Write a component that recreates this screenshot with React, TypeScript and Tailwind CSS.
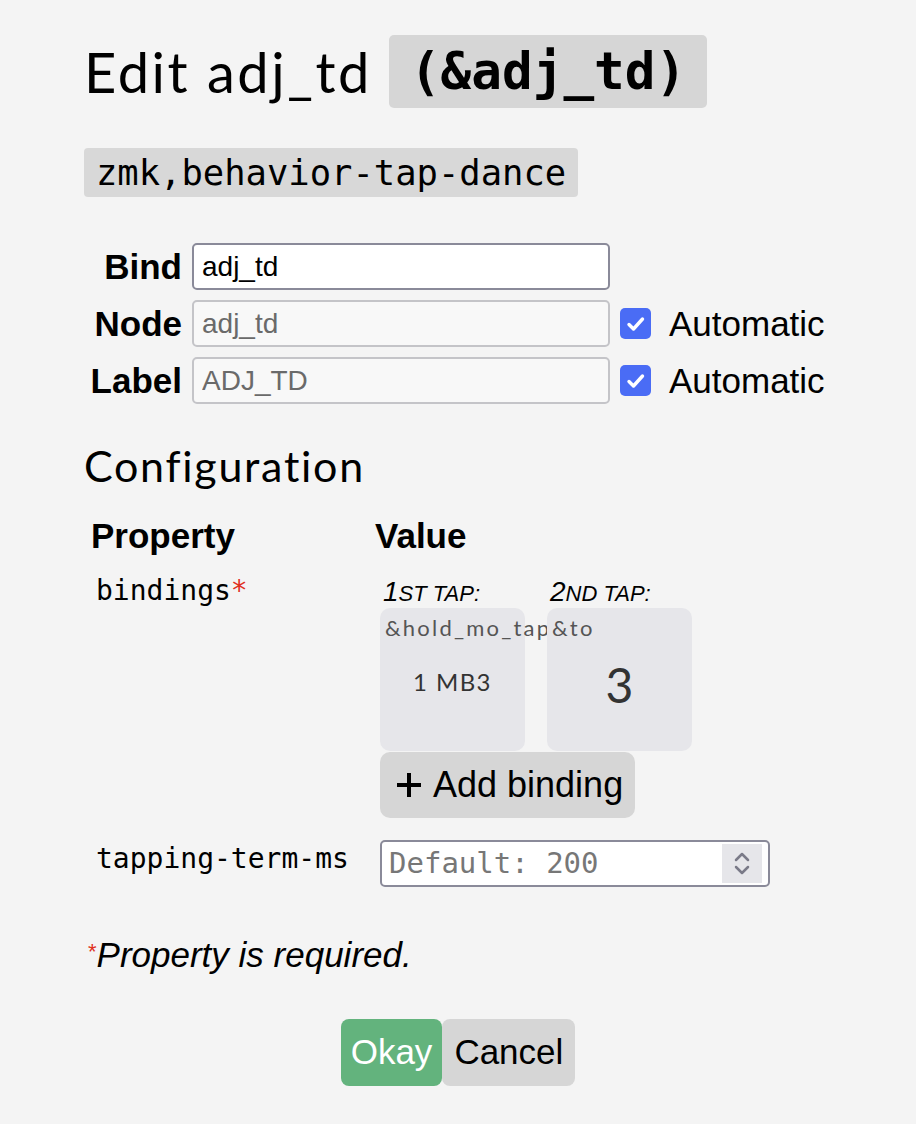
import { useState } from 'react';

const round = "font-['Lato','Noto_Sans',sans-serif]";
const mono = "font-['DejaVu_Sans_Mono','Liberation_Mono',monospace]";
const sans = "font-['Liberation_Sans','Arial',sans-serif]";

function Checkbox({ checked, onChange }: { checked: boolean; onChange: (v: boolean) => void }) {
  return (
    <button
      type="button"
      onClick={() => onChange(!checked)}
      className={`flex h-[31px] w-[31px] items-center justify-center rounded-[5px] ${
        checked ? 'bg-[#4a6cf5]' : 'border-2 border-[#8a8a99] bg-white'
      }`}
    >
      {checked ? (
        <svg width="24" height="24" viewBox="0 0 24 24" fill="none">
          <path d="M5 12.5l4.5 4.5 9-10" stroke="white" strokeWidth="3.4" strokeLinecap="round" strokeLinejoin="round" />
        </svg>
      ) : null}
    </button>
  );
}

function BindingCard({
  num,
  rest,
  behavior,
  param,
  big,
}: {
  num: string;
  rest: string;
  behavior: string;
  param: string;
  big?: boolean;
}) {
  return (
    <div className="flex w-[167px] flex-col">
      <div className={`${sans} h-[31px] pl-[3px] italic leading-[29px]`}>
        <span className="text-[28px]">{num}</span>
        <span className="text-[22px]">{rest}</span>
      </div>
      <div className="relative flex h-[143px] w-[145px] flex-col rounded-[10px] bg-[#e6e6ea]">
        <div className={`${round} whitespace-nowrap pl-[5px] pt-[7px] text-[22px] leading-[26px] tracking-[0.1em] text-[#555]`}>
          {behavior}
        </div>
        <div
          className={`${round} flex flex-1 items-start justify-center pb-[20px] text-[#333] ${
            big ? 'pt-[20px] text-[48px] leading-[48px]' : 'pt-[26px] text-[24px] leading-[30px] tracking-[0.06em]'
          }`}
        >
          {param}
        </div>
      </div>
    </div>
  );
}

export default function App() {
  const [bind, setBind] = useState('adj_td');
  const [autoNode, setAutoNode] = useState(true);
  const [autoLabel, setAutoLabel] = useState(true);
  const [term, setTerm] = useState('');

  const inputBase = `${sans} h-[47px] w-[418px] rounded-[5px] border-2 px-[8px] text-[28px] outline-none`;

  return (
    <div className="min-h-screen bg-[#f4f4f4] pl-[84px] pt-[35px] text-black">
      <h1 className={`${round} flex items-center text-[56px] leading-[73px] tracking-[0.045em]`}>
        <span>Edit adj_td</span>
        <code className={`${mono} ml-[17px] h-[73px] rounded-[5px] bg-[#d6d6d6] px-[21px] text-[51px] font-bold leading-[73px] tracking-normal`}>
          (&amp;adj_td)
        </code>
      </h1>

      <div className="mt-[40px]">
        <code className={`${mono} inline-block h-[49px] rounded-[4px] bg-[#d8d8d8] px-[12px] text-[35.5px] leading-[49px]`}>
          zmk,behavior-tap-dance
        </code>
      </div>

      <div className="mt-[46px] grid grid-cols-[94px_418px_auto] items-center gap-x-[10px] gap-y-[10px] pl-[4px]">
        <label className={`${sans} text-right text-[35px] font-bold leading-[47px]`}>Bind</label>
        <input
          className={`${inputBase} border-[#8a8a99] bg-white text-black`}
          value={bind}
          onChange={(e) => setBind(e.target.value)}
        />
        <div />

        <label className={`${sans} text-right text-[35px] font-bold leading-[47px]`}>Node</label>
        <input
          className={`${inputBase} border-[#c4c4c8] bg-[#f8f8f8] text-[#6a6a6a]`}
          value={autoNode ? bind : ''}
          disabled={autoNode}
          readOnly
        />
        <div className="flex h-[47px] items-center gap-[18px]">
          <Checkbox checked={autoNode} onChange={setAutoNode} />
          <span className={`${sans} text-[35px] leading-[47px]`}>Automatic</span>
        </div>

        <label className={`${sans} text-right text-[35px] font-bold leading-[47px]`}>Label</label>
        <input
          className={`${inputBase} border-[#c4c4c8] bg-[#f8f8f8] text-[#6a6a6a]`}
          value={autoLabel ? bind.toUpperCase() : ''}
          disabled={autoLabel}
          readOnly
        />
        <div className="flex h-[47px] items-center gap-[18px]">
          <Checkbox checked={autoLabel} onChange={setAutoLabel} />
          <span className={`${sans} text-[35px] leading-[47px]`}>Automatic</span>
        </div>
      </div>

      <h2 className={`${round} mt-[36px] text-[43px] leading-[52px] tracking-[0.04em]`}>Configuration</h2>

      <div className="mt-[22px] grid grid-cols-[296px_1fr]">
        <div className={`${sans} pl-[7px] text-[35px] font-bold leading-[44px]`}>Property</div>
        <div className={`${sans} -ml-[5px] text-[35px] font-bold leading-[44px]`}>Value</div>

        <div className={`${mono} pl-[12px] pt-[16px] text-[28px] leading-[34px]`}>
          bindings<span className="text-[#e0301e]">*</span>
        </div>
        <div className="pt-[19px]">
          <div className="flex">
            <BindingCard num="1" rest="ST TAP:" behavior="&hold_mo_tap" param="1 MB3" />
            <BindingCard num="2" rest="ND TAP:" behavior="&to" param="3" big />
          </div>
          <button
            type="button"
            className={`${sans} mt-[1px] flex h-[66px] items-center gap-[9px] rounded-[10px] bg-[#d6d6d6] pl-[14px] pr-[12px] text-[36px]`}
          >
            <svg width="30" height="30" viewBox="0 0 30 30">
              <path d="M15 3v24M3 15h24" stroke="black" strokeWidth="4" />
            </svg>
            Add binding
          </button>
        </div>

        <div className={`${mono} pl-[12px] pt-[24px] text-[28px] leading-[34px]`}>tapping-term-ms</div>
        <div className="pt-[22px]">
          <div className="flex h-[47px] w-[390px] items-center rounded-[5px] border-2 border-[#8a8a99] bg-white pl-[7px] pr-[6px]">
            <input
              className={`${mono} min-w-0 flex-1 bg-transparent text-[29px] text-black outline-none placeholder:text-[#777]`}
              placeholder="Default: 200"
              value={term}
              onChange={(e) => setTerm(e.target.value.replace(/[^0-9]/g, ''))}
            />
            <div className="flex h-[39px] w-[40px] flex-col items-center justify-center gap-[3px] bg-[#e6e6ea]">
              <svg width="16" height="10" viewBox="0 0 16 10" fill="none">
                <path d="M2 8l6-6 6 6" stroke="#7a7a88" strokeWidth="2.5" strokeLinecap="round" strokeLinejoin="round" />
              </svg>
              <svg width="16" height="10" viewBox="0 0 16 10" fill="none">
                <path d="M2 2l6 6 6-6" stroke="#7a7a88" strokeWidth="2.5" strokeLinecap="round" strokeLinejoin="round" />
              </svg>
            </div>
          </div>
        </div>
      </div>

      <p className={`${sans} mt-[48px] pl-[4px] text-[35px] italic leading-[40px]`}>
        <span className="relative -top-[8px] text-[22px] not-italic text-[#e0301e]">*</span>Property is required.
      </p>

      <div className="-ml-[84px] mt-[39px] flex justify-center">
        <button type="button" className={`${sans} h-[67px] rounded-[8px] bg-[#63b37d] px-[10px] text-[35px] text-white`}>
          Okay
        </button>
        <button type="button" className={`${sans} h-[67px] rounded-[8px] bg-[#d6d6d6] px-[12px] text-[35px] text-black`}>
          Cancel
        </button>
      </div>
    </div>
  );
}
